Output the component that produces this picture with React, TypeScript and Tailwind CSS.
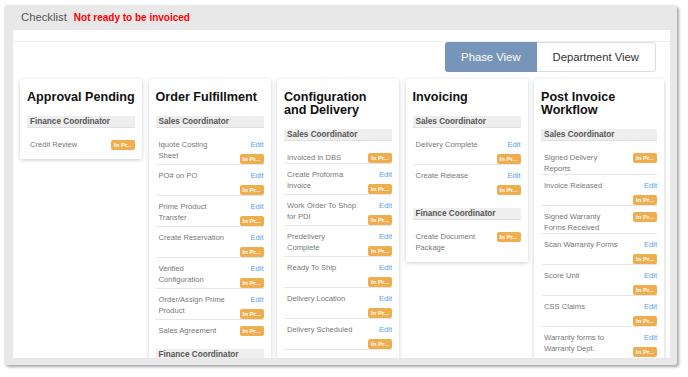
type Item = { name: string; edit?: boolean; sep?: boolean };
type Group = { role: string; items: Item[] };
type Phase = { title: string; wide?: boolean; groups: Group[] };

const phases: Phase[] = [
  {
    title: "Approval Pending",
    groups: [{ role: "Finance Coordinator", items: [{ name: "Credit Review" }] }],
  },
  {
    title: "Order Fulfillment",
    groups: [
      {
        role: "Sales Coordinator",
        items: [
          { name: "Iquote Costing\nSheet", edit: true },
          { name: "PO# on PO", edit: true },
          { name: "Prime Product\nTransfer", edit: true },
          { name: "Create Reservation", edit: true },
          { name: "Verified\nConfiguration", edit: true },
          { name: "Order/Assign Prime\nProduct", edit: true },
          { name: "Sales Agreement" },
        ],
      },
      { role: "Finance Coordinator", items: [] },
    ],
  },
  {
    title: "Configuration\nand Delivery",
    groups: [
      {
        role: "Sales Coordinator",
        items: [
          { name: "Invoiced in DBS" },
          { name: "Create Proforma\nInvoice", edit: true },
          { name: "Work Order To Shop\nfor PDI", edit: true },
          { name: "Predelivery\nComplete", edit: true },
          { name: "Ready To Ship", edit: true },
          { name: "Delivery Location", edit: true },
          { name: "Delivery Scheduled", edit: true, sep: true },
        ],
      },
    ],
  },
  {
    title: "Invoicing",
    groups: [
      {
        role: "Sales Coordinator",
        items: [
          { name: "Delivery Complete", edit: true },
          { name: "Create Release", edit: true },
        ],
      },
      { role: "Finance Coordinator", items: [{ name: "Create Document\nPackage" }] },
    ],
  },
  {
    title: "Post Invoice\nWorkflow",
    wide: true,
    groups: [
      {
        role: "Sales Coordinator",
        items: [
          { name: "Signed Delivery\nReports" },
          { name: "Invoice Released", edit: true },
          { name: "Signed Warranty\nForms Received" },
          { name: "Scan Warranty Forms", edit: true },
          { name: "Score Unit", edit: true },
          { name: "CSS Claims", edit: true },
          { name: "Warranty forms to\nWarranty Dept.", edit: true },
        ],
      },
    ],
  },
];

function Badge({ edit }: { edit?: boolean }) {
  return (
    <span
      className={
        (edit ? "mt-[4px] " : "mt-[1px] ") +
        "block w-[24px] h-[10px] rounded-[2px] bg-[#f0ad4e] text-white text-[6px] font-bold leading-[10px] text-center"
      }
    >
      In Pr...
    </span>
  );
}

function PhaseCard({ phase }: { phase: Phase }) {
  return (
    <div
      className={
        (phase.wide ? "w-[130px] " : "w-[122px] ") +
        "shrink-0 bg-white rounded-[2px] shadow-[0_1px_4px_rgba(0,0,0,0.2)] px-[7px] pt-[12px] pb-[9px]"
      }
    >
      <h3 className="text-[12.6px] leading-[13px] font-bold text-[#111] whitespace-pre-line mb-[12px]">
        {phase.title}
      </h3>
      {phase.groups.map((g, gi) => (
        <div key={gi} className={gi > 0 ? "mt-[13px]" : ""}>
          <div className="h-[12px] bg-[#eeeeee] border-b border-[#e0e0e0] pl-[3px] text-[8.2px] leading-[11px] font-bold text-[#555]">
            {g.role}
          </div>
          <div className="mt-[6px]">
            {g.items.map((it, i) => (
              <div
                key={i}
                className={
                  (i < g.items.length - 1 || it.sep ? "border-b border-[#e6e6e6] " : "") +
                  "flex justify-between pl-[3px] pt-[5px]"
                }
              >
                <div className="text-[7.6px] leading-[11px] text-[#777] whitespace-pre-line">
                  {it.name}
                </div>
                <div className="flex flex-col items-end shrink-0">
                  {it.edit && (
                    <span className="text-[7.6px] leading-[11px] text-[#5b9fe3]">Edit</span>
                  )}
                  <Badge edit={it.edit} />
                </div>
              </div>
            ))}
          </div>
        </div>
      ))}
    </div>
  );
}

export default function App() {
  return (
    <div className="w-[688px] h-[377px] bg-white pt-[5px] pl-[4px] font-['Liberation_Sans',Arial,sans-serif]">
      <div className="w-[673px] h-[360px] bg-[#e8e8e8] rounded-[3px] shadow-[2px_2px_3px_rgba(0,0,0,0.35)] flex flex-col">
        <div className="h-[25px] flex items-center pl-[17px]">
          <span className="text-[11.3px] text-[#555]">Checklist</span>
          <span className="ml-[7px] text-[10px] font-bold text-[#f00]">Not ready to be invoiced</span>
        </div>
        <div className="ml-[9px] mr-[7px] h-[328px] bg-white overflow-hidden">
          <div className="h-[12px] border-b border-[#eeeeee]"></div>
          <div className="flex justify-end pr-[14px]">
            <div className="flex h-[30px] text-[11.3px]">
              <div className="flex items-center px-[16px] bg-[#7794b9] text-white rounded-l-[3px]">
                Phase View
              </div>
              <div className="flex items-center px-[16px] bg-white text-[#333] border border-l-0 border-[#dddddd] rounded-r-[3px]">
                Department View
              </div>
            </div>
          </div>
          <div className="flex items-start gap-[6.5px] pl-[7px] mt-[7px]">
            {phases.map((p, i) => (
              <PhaseCard key={i} phase={p} />
            ))}
          </div>
        </div>
      </div>
    </div>
  );
}
